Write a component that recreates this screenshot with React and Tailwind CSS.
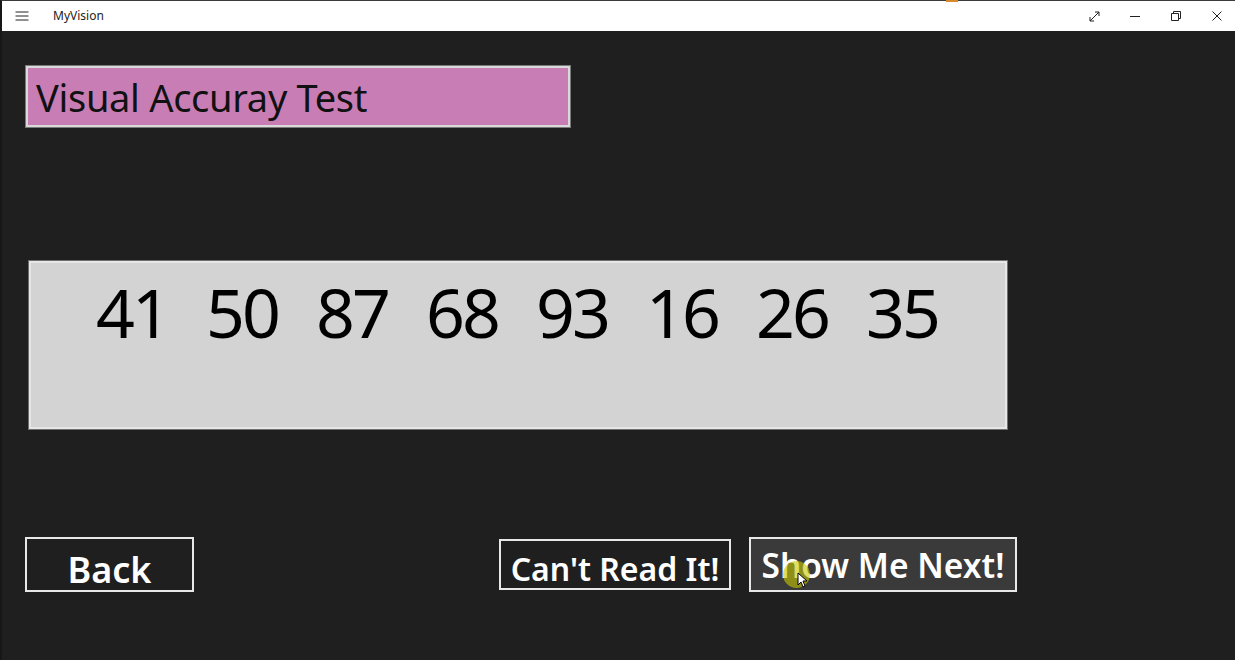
import React from "react";

const numbers = ["41", "50", "87", "68", "93", "16", "26", "35"];

function TitleBar() {
  return (
    <div className="h-[30px] bg-white flex items-center shrink-0">
      <svg width="14" height="10" viewBox="0 0 14 10" className="ml-[13px]">
        <path d="M0.5 1h13M0.5 5h13M0.5 9h13" stroke="#222" strokeWidth="1" />
      </svg>
      <span className="ml-[24px] text-[12px] text-[#222]">MyVision</span>
      <div className="ml-auto flex items-center h-full">
        <div className="w-[41px] pl-[5px] h-full flex items-center justify-center">
          <svg width="11" height="11" viewBox="0 0 11 11">
            <path d="M1 10L10 1M6 1h4v4M1 6v4h4" stroke="#222" strokeWidth="1" fill="none" />
          </svg>
        </div>
        <div className="w-[41px] pl-[5px] h-full flex items-center justify-center">
          <svg width="10" height="10" viewBox="0 0 10 10">
            <path d="M0 5.5h10" stroke="#222" strokeWidth="1" />
          </svg>
        </div>
        <div className="w-[41px] pl-[5px] h-full flex items-center justify-center">
          <svg width="10" height="10" viewBox="0 0 10 10">
            <path d="M0.5 2.5h7v7h-7z M2.5 2.5V0.5h7v7h-2" stroke="#222" strokeWidth="1" fill="none" />
          </svg>
        </div>
        <div className="w-[41px] pl-[5px] h-full flex items-center justify-center">
          <svg width="10" height="10" viewBox="0 0 10 10">
            <path d="M0.5 0.5l9 9M9.5 0.5l-9 9" stroke="#222" strokeWidth="1" />
          </svg>
        </div>
      </div>
    </div>
  );
}

export default function App() {
  const font = { fontFamily: '"Noto Sans", "Open Sans", sans-serif' };
  return (
    <div className="w-[1235px] h-[660px] bg-[#1f1f1f] border-t border-t-[#3b3b3b] border-l-2 border-l-[#171717] flex flex-col relative" style={font}>
      <div className="absolute left-[944px] top-[-1px] w-[12px] h-[2px] bg-[#d98a2b]" />
      <TitleBar />
      <div className="flex flex-col pl-[23px]">
        <div className="mt-[34px] w-[546px] h-[63px] bg-[#c87db5] border border-[#7a7a7a] shadow-[inset_0_0_0_2px_#d9d9d9] flex items-center pl-[10px]">
          <span className="text-[38px] tracking-[-0.3px] text-[#111] leading-none">Visual Accuray Test</span>
        </div>
        <div className="mt-[132px] ml-[3px] w-[980px] h-[170px] bg-[#d3d3d3] border border-[#6f6f6f] shadow-[inset_0_0_0_2px_#e6e6e6] flex pl-[48px] pt-[8px]">
          {numbers.map((n) => (
            <div key={n} className="w-[110px] text-center text-[68px] tracking-[-3px] leading-[86px] text-black">
              {n}
            </div>
          ))}
        </div>
        <div className="mt-[107px] flex items-center">
          <button className="w-[169px] h-[55px] border-2 border-[#e8e8e8] bg-[#1f1f1f] text-white text-[36px] font-semibold leading-none flex items-end justify-center pb-[2px]">
            Back
          </button>
          <button className="ml-[305px] w-[232px] h-[51px] border-2 border-[#e8e8e8] bg-[#1f1f1f] text-white text-[32px] font-semibold leading-none flex items-end justify-center pb-[3px]">
            Can't Read It!
          </button>
          <button className="ml-[18px] w-[268px] h-[55px] border-2 border-[#e8e8e8] bg-[#3a3a3a] text-white text-[33.5px] font-semibold leading-none flex items-center justify-center pt-[2px]">
            Show Me Next!
          </button>
        </div>
      </div>
      <div className="absolute left-[781px] top-[560px] w-[27px] h-[27px] rounded-full bg-[#c8c800]/60" />
      <svg className="absolute left-[795px] top-[571px]" width="10" height="16" viewBox="0 0 10 16">
        <path d="M1 1v12l3-3 2 5 2-1-2-5h4z" fill="#fff" stroke="#000" strokeWidth="1" />
      </svg>
    </div>
  );
}
